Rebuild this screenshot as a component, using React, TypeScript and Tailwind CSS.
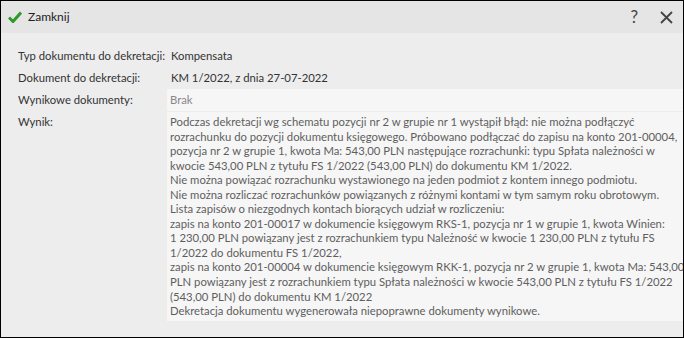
const wynik = [
  "Podczas dekretacji wg schematu pozycji nr 2 w grupie nr 1 wystąpił błąd: nie można podłączyć",
  "rozrachunku do pozycji dokumentu księgowego. Próbowano podłączać do zapisu na konto 201-00004,",
  "pozycja nr 2 w grupie 1, kwota Ma: 543,00 PLN następujące rozrachunki: typu Spłata należności w",
  "kwocie 543,00 PLN z tytułu FS 1/2022 (543,00 PLN) do dokumentu KM 1/2022.",
  "Nie można powiązać rozrachunku wystawionego na jeden podmiot z kontem innego podmiotu.",
  "Nie można rozliczać rozrachunków powiązanych z różnymi kontami w tym samym roku obrotowym.",
  "Lista zapisów o niezgodnych kontach biorących udział w rozliczeniu:",
  "zapis na konto 201-00017 w dokumencie księgowym RKS-1, pozycja nr 1 w grupie 1, kwota Winien:",
  "1 230,00 PLN powiązany jest z rozrachunkiem typu Należność w kwocie 1 230,00 PLN z tytułu FS",
  "1/2022 do dokumentu FS 1/2022,",
  "zapis na konto 201-00004 w dokumencie księgowym RKK-1, pozycja nr 2 w grupie 1, kwota Ma: 543,00",
  "PLN powiązany jest z rozrachunkiem typu Spłata należności w kwocie 543,00 PLN z tytułu FS 1/2022",
  "(543,00 PLN) do dokumentu KM 1/2022",
  "Dekretacja dokumentu wygenerowała niepoprawne dokumenty wynikowe.",
];

export default function App() {
  return (
    <div
      className="w-[684px] h-[338px] border border-black bg-[#ededed] flex flex-col text-[11.3px] text-[#333] overflow-hidden"
      style={{ fontFamily: 'Lato, "Open Sans", sans-serif' }}
    >
      <div className="h-[32px] bg-[#e5e5e5] flex items-center pl-[7px] pr-[10px] shrink-0 text-[12px]">
        <svg width="14" height="12" viewBox="0 0 14 12" className="mr-[6px]">
          <path d="M1 6.5 L5 10.5 L13 1.5" fill="none" stroke="#2e9a2e" strokeWidth="3" />
        </svg>
        <span className="text-[#222]">Zamknij</span>
        <div className="flex-1" />
        <span className="text-[17px] text-[#444] mr-[22px]">?</span>
        <svg width="13" height="13" viewBox="0 0 13 13">
          <path d="M1 1 L12 12 M12 1 L1 12" stroke="#444" strokeWidth="1.8" />
        </svg>
      </div>
      <div className="pl-[17px] pr-[16px] pt-[12px] grid grid-cols-[149px_1fr] leading-[22px]">
        <div className="whitespace-nowrap">Typ dokumentu do dekretacji:</div>
        <div className="pl-[4px]">Kompensata</div>
        <div>Dokument do dekretacji:</div>
        <div className="pl-[4px]">KM 1/2022, z dnia 27-07-2022</div>
        <div>Wynikowe dokumenty:</div>
        <div className="pl-[3px] bg-[#f6f6f6] text-[#888] h-[22px] mb-[1px]">Brak</div>
        <div className="leading-[20px]">Wynik:</div>
        <div className="pl-[3px] pr-[4px] pt-[3px] pb-[2px] bg-[#f6f6f6] text-[#5e5e5e] leading-[14.55px]">
          {wynik.map((l, i) => (
            <div key={i} className="whitespace-nowrap">{l}</div>
          ))}
        </div>
      </div>
    </div>
  );
}
